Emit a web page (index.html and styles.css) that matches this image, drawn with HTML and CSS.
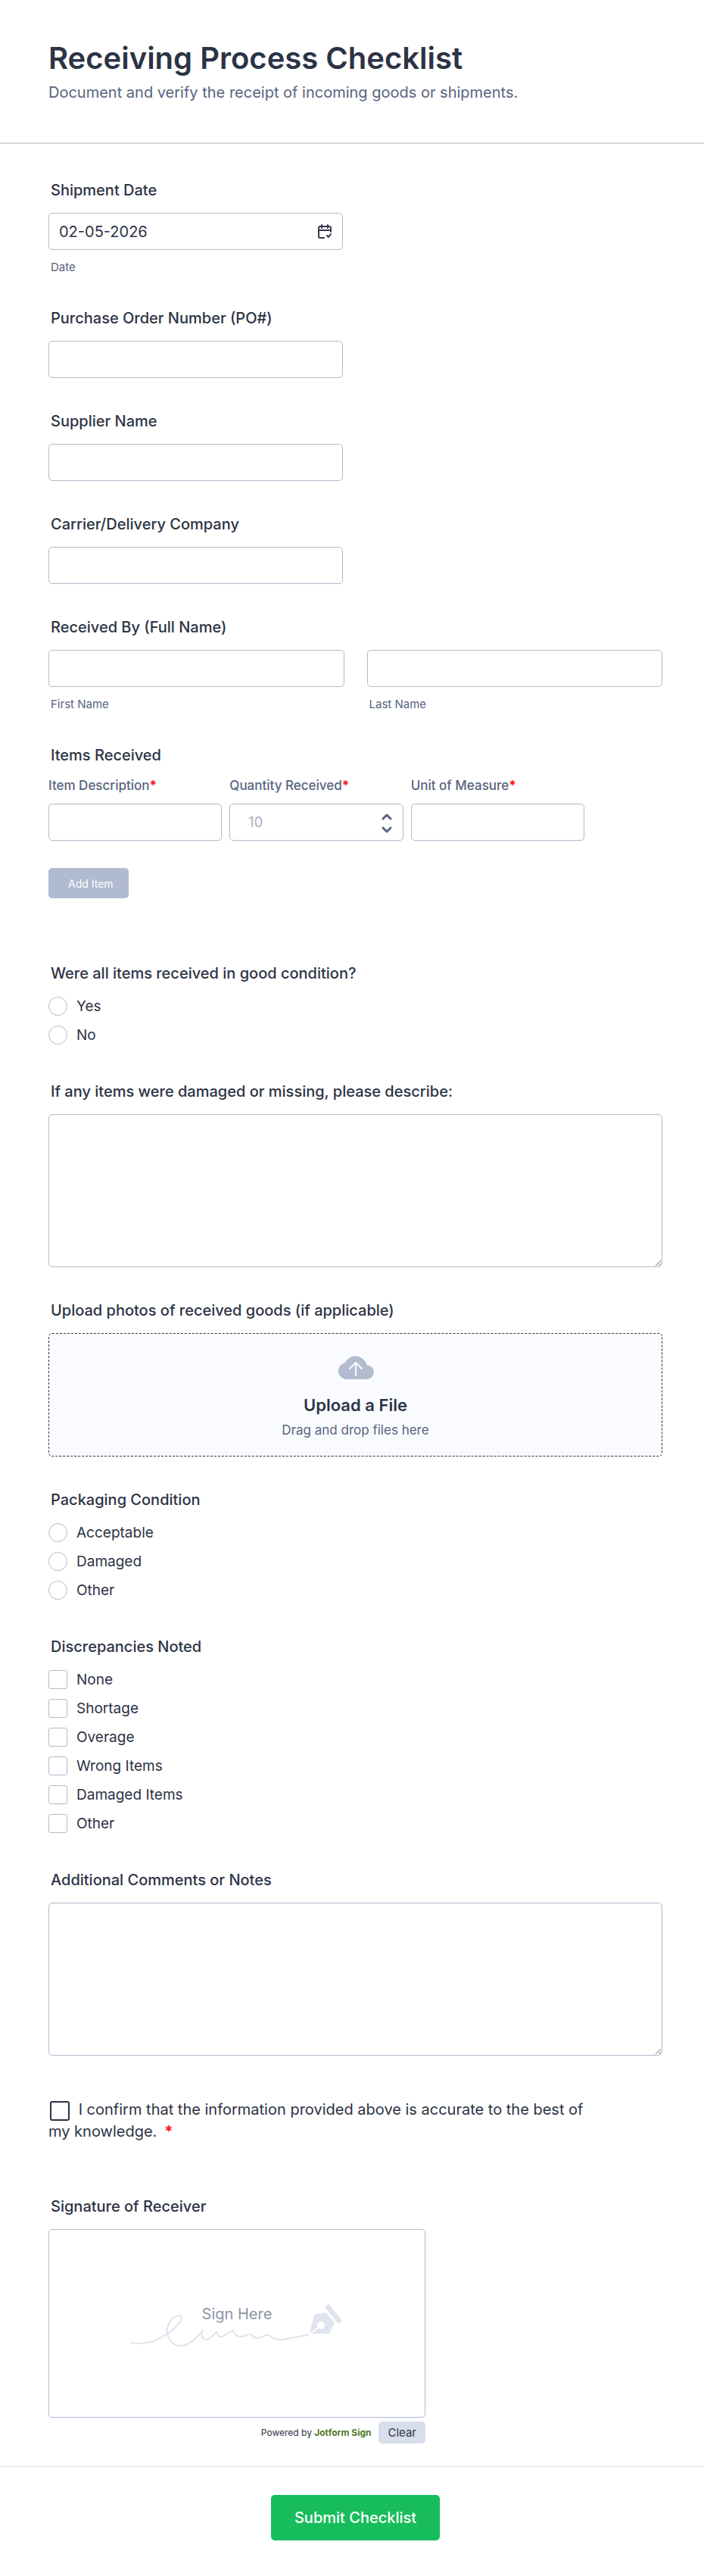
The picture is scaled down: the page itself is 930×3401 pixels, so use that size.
FILE: index.html
```html
<!DOCTYPE html>
<html lang="en">
<head>
    <meta charset="UTF-8">
    <meta name="viewport" content="width=device-width, initial-scale=1.0">
    <title>Receiving Process Checklist</title>
    <link rel="stylesheet" href="styles.css">
</head>
<body>
    <form class="form" action="#" method="post">
        <header class="form-header">
            <h1>Receiving Process Checklist</h1>
            <p>Document and verify the receipt of incoming goods or shipments.</p>
        </header>

        <div class="form-body">
            <div class="field">
                <label class="field-label" for="shipment_date">Shipment Date</label>
                <div class="date-box half">
                    <input class="control" type="text" id="shipment_date" name="shipment_date" value="02-05-2026">
                    <svg class="date-icon" viewBox="0 0 20 20" fill="none" stroke="currentColor" stroke-width="2" stroke-linecap="round" stroke-linejoin="round" aria-hidden="true">
                        <path d="M9 18H4a2 2 0 0 1-2-2V5a2 2 0 0 1 2-2h12a2 2 0 0 1 2 2v5M2 8h16M6 1v4M14 1v4M13 15l2 2 3-4"/>
                    </svg>
                </div>
                <label class="sub-label" for="shipment_date">Date</label>
            </div>

            <div class="field">
                <label class="field-label" for="po_number">Purchase Order Number (PO#)</label>
                <input class="control half" type="text" id="po_number" name="po_number">
            </div>

            <div class="field">
                <label class="field-label" for="supplier">Supplier Name</label>
                <input class="control half" type="text" id="supplier" name="supplier">
            </div>

            <div class="field">
                <label class="field-label" for="carrier">Carrier/Delivery Company</label>
                <input class="control half" type="text" id="carrier" name="carrier">
            </div>

            <div class="field">
                <label class="field-label" for="first_name">Received By (Full Name)</label>
                <div class="name-row">
                    <div>
                        <input class="control" type="text" id="first_name" name="first_name">
                        <label class="sub-label" for="first_name">First Name</label>
                    </div>
                    <div>
                        <input class="control" type="text" id="last_name" name="last_name">
                        <label class="sub-label" for="last_name">Last Name</label>
                    </div>
                </div>
            </div>

            <div class="field items-field">
                <div class="field-label">Items Received</div>
                <div class="items-row">
                    <div>
                        <label class="item-label" for="item_description">Item Description<span class="required">*</span></label>
                        <input class="control" type="text" id="item_description" name="item_description">
                    </div>
                    <div>
                        <label class="item-label" for="item_quantity">Quantity Received<span class="required">*</span></label>
                        <div class="quantity-box">
                            <input class="control" type="number" id="item_quantity" name="item_quantity" placeholder="10">
                            <svg class="quantity-arrows" viewBox="0 0 14 26" fill="none" stroke="currentColor" stroke-width="3" stroke-linecap="round" stroke-linejoin="round" aria-hidden="true">
                                <path d="M2 7l5-5 5 5M2 19l5 5 5-5"/>
                            </svg>
                        </div>
                    </div>
                    <div>
                        <label class="item-label" for="item_unit">Unit of Measure<span class="required">*</span></label>
                        <input class="control" type="text" id="item_unit" name="item_unit">
                    </div>
                </div>
                <button class="add-button" type="button">Add Item</button>
            </div>

            <fieldset class="field choice-field">
                <legend class="field-label">Were all items received in good condition?</legend>
                <div class="choices">
                    <label class="choice"><input type="radio" name="good_condition" value="Yes">Yes</label>
                    <label class="choice"><input type="radio" name="good_condition" value="No">No</label>
                </div>
            </fieldset>

            <div class="field">
                <label class="field-label" for="damage_notes">If any items were damaged or missing, please describe:</label>
                <textarea class="control" id="damage_notes" name="damage_notes"></textarea>
            </div>

            <div class="field">
                <div class="field-label" id="upload_label">Upload photos of received goods (if applicable)</div>
                <label class="upload">
                    <input type="file" name="photos" aria-labelledby="upload_label" multiple>
                    <svg class="upload-icon" viewBox="0 0 48 32" aria-hidden="true">
                        <path fill="#b3bccf" d="M38.600 13.200A15.500 15.500 0 0 0 9.500 10.300 11 11 0 0 0 11 32h27.500a9.400 9.400 0 0 0 .1-18.800z"/>
                        <path fill="none" stroke="#fafbff" stroke-width="2" stroke-linecap="round" stroke-linejoin="round" d="M24 27V10M16 18l8-8 8 8"/>
                    </svg>
                    <span class="upload-title">Upload a File</span>
                    <span class="upload-text">Drag and drop files here</span>
                </label>
            </div>

            <fieldset class="field choice-field">
                <legend class="field-label">Packaging Condition</legend>
                <div class="choices">
                    <label class="choice"><input type="radio" name="packaging" value="Acceptable">Acceptable</label>
                    <label class="choice"><input type="radio" name="packaging" value="Damaged">Damaged</label>
                    <label class="choice"><input type="radio" name="packaging" value="Other">Other</label>
                </div>
            </fieldset>

            <fieldset class="field choice-field">
                <legend class="field-label">Discrepancies Noted</legend>
                <div class="choices">
                    <label class="choice"><input type="checkbox" name="discrepancies" value="None">None</label>
                    <label class="choice"><input type="checkbox" name="discrepancies" value="Shortage">Shortage</label>
                    <label class="choice"><input type="checkbox" name="discrepancies" value="Overage">Overage</label>
                    <label class="choice"><input type="checkbox" name="discrepancies" value="Wrong Items">Wrong Items</label>
                    <label class="choice"><input type="checkbox" name="discrepancies" value="Damaged Items">Damaged Items</label>
                    <label class="choice"><input type="checkbox" name="discrepancies" value="Other">Other</label>
                </div>
            </fieldset>

            <div class="field">
                <label class="field-label" for="comments">Additional Comments or Notes</label>
                <textarea class="control" id="comments" name="comments"></textarea>
            </div>

            <div class="field confirm">
                <input type="checkbox" id="confirm" name="confirm">
                <label for="confirm">I confirm that the information provided above is accurate to the best of my knowledge.<span class="required">*</span></label>
            </div>

            <div class="signature">
                <div class="field-label">Signature of Receiver</div>
                <div class="signature-pad">
                    <svg class="signature-art" viewBox="0 0 280 58" aria-hidden="true">
                        <path fill="none" stroke="#dfe3ed" stroke-width="2" stroke-linecap="round" d="M1 51C20 55 35 48 48 39C60 31 70 20 66 16C59 12 46 25 48 38C50 49 57 56 66 55C79 54 88 43 94 36C93 41 94 47 99 47C105 47 110 38 114 37C114 41 115 43 119 43C126 42 130 36 135 35C137 40 140 44 145 43C151 43 153 39 158 40C162 44 166 46 171 44C176 42 181 39 185 43C190 47 194 48 201 47C212 45 223 42 234 41"/>
                        <path fill="#dfe3ed" d="M242 14l15-3 12 13-7 15h-25l-1-1zM256 4l5-4 18 22-5 4z"/>
                        <path stroke="#fff" stroke-width="2" d="M236 40l15-12"/>
                        <circle cx="251" cy="28" r="5" fill="#fff"/>
                    </svg>
                    <span class="signature-text">Sign Here</span>
                </div>
                <div class="signature-footer">
                    <span>Powered by <a href="#">Jotform Sign</a></span>
                    <button class="clear-button" type="button">Clear</button>
                </div>
            </div>
        </div>

        <div class="form-footer">
            <button class="submit-button" type="submit">Submit Checklist</button>
        </div>
    </form>
</body>
</html>
```
FILE: styles.css
```css
* {
    box-sizing: border-box;
}

body {
    margin: 0;
    background-color: #fff;
    color: #2c3345;
    font-family: Inter, 'Liberation Sans', sans-serif;
    font-size: 20px;
}

input, textarea, button {
    font-family: inherit;
    color: inherit;
}

.form-header {
    padding: 52px 64px 53px;
    border-bottom: 2px solid #d7d8e1;
}

.form-header h1 {
    margin: 0;
    font-size: 40px;
    font-weight: 600;
    line-height: 50px;
}

.form-header p {
    margin: 7px 0 0;
    color: #57647e;
    line-height: 26px;
}

.form-body {
    padding: 48px 55px 30px 64px;
}

.field {
    margin: 0 0 44px;
    padding: 0;
    border: 0;
}

.field-label {
    display: block;
    padding: 0 3px;
    margin-bottom: 17px;
    font-weight: 500;
    line-height: 26px;
}

.control {
    display: block;
    width: 100%;
    height: 49px;
    padding: 0 13px;
    border: 1px solid #b4b9cc;
    border-radius: 5px;
    background-color: #fff;
    font-size: 20px;
}

.half {
    width: 48%;
}

textarea.control {
    height: 202px;
    padding: 13px;
}

.sub-label {
    display: block;
    margin-top: 13px;
    padding: 0 3px;
    color: #57647e;
    font-size: 15px;
    line-height: 20px;
}

.required {
    color: #ff1414;
    font-weight: 700;
}

/* Date */
.date-box, .quantity-box {
    position: relative;
}

.date-icon {
    position: absolute;
    top: 15px;
    right: 14px;
    width: 20px;
    height: 20px;
    color: #39374e;
}

.name-row {
    display: grid;
    grid-template-columns: 1fr 1fr;
    gap: 30px;
}

/* Items */
.items-field {
    margin-bottom: 86px;
}

.items-row {
    display: grid;
    grid-template-columns: repeat(3, 1fr);
    gap: 10px;
    max-width: 708px;
    margin-bottom: 36px;
}

.item-label {
    display: block;
    margin-bottom: 14px;
    color: #57647e;
    font-size: 17px;
    font-weight: 500;
    line-height: 20px;
}

.quantity-box .control {
    padding-left: 24px;
    appearance: textfield;
    font-size: 18px;
}

.quantity-box .control::placeholder {
    color: #a9aeba;
}

.quantity-arrows {
    position: absolute;
    top: 13px;
    right: 15px;
    width: 14px;
    height: 26px;
    color: #57647e;
}

.add-button {
    display: block;
    height: 40px;
    padding: 0 20px 0 26px;
    border: 0;
    border-radius: 5px;
    background-color: #b0bad1;
    color: #fff;
    font-size: 14px;
}

/* Radios and tick boxes */
.choice-field {
    margin-bottom: 49px;
}

.choice-field .field-label {
    margin-bottom: 18px;
}

.choices {
    display: grid;
    justify-items: start;
    gap: 13px;
}

.choice {
    display: flex;
    align-items: center;
    gap: 12px;
    font-size: 19px;
    line-height: 25px;
}

input[type="radio"], input[type="checkbox"] {
    appearance: none;
    width: 25px;
    height: 25px;
    margin: 0;
    border: 1px solid #b4b9cc;
    border-radius: 3px;
    background-color: #fff;
}

input[type="radio"] {
    border-radius: 50%;
}

/* Upload */
.upload {
    display: flex;
    flex-direction: column;
    align-items: center;
    padding: 28px 20px 21px;
    border: 1px dashed #2c3345;
    border-radius: 5px;
    background-color: #fafbff;
}

.upload input {
    position: absolute;
    opacity: 0;
    width: 1px;
    height: 1px;
}

.upload-icon {
    width: 48px;
    height: 32px;
}

.upload-title {
    margin-top: 20px;
    font-size: 22px;
    font-weight: 600;
    line-height: 28px;
}

.upload-text {
    margin-top: 6px;
    color: #57647e;
    font-size: 17px;
    line-height: 26px;
}

/* Confirmation */
.confirm {
    max-width: 720px;
    margin: 57px 0 72px;
    line-height: 28px;
}

.confirm input[type="checkbox"] {
    width: 26px;
    height: 26px;
    margin: 0 6px 0 2px;
    border: 2px solid #2c3345;
    vertical-align: middle;
}

.confirm .required {
    margin-left: 10px;
}

/* Signature */
.signature {
    width: 498px;
    max-width: 100%;
}

.signature-pad {
    position: relative;
    display: flex;
    justify-content: center;
    height: 249px;
    padding-top: 98px;
    border: 1px solid #b0bad1;
    border-radius: 5px;
}

.signature-art {
    width: 280px;
    height: 58px;
}

.signature-text {
    position: absolute;
    top: 98px;
    color: #8d95a6;
    line-height: 26px;
}

.signature-footer {
    display: flex;
    justify-content: flex-end;
    align-items: center;
    gap: 10px;
    margin-top: 5px;
    font-size: 12px;
}

.signature-footer a {
    color: #4f7a1f;
    font-weight: 700;
    text-decoration: none;
}

.clear-button {
    height: 29px;
    padding: 0 12px;
    border: 0;
    border-radius: 5px;
    background-color: #d8deec;
    font-size: 15px;
}

.form-footer {
    padding: 37px 55px 49px 64px;
    border-top: 1px solid #e3e5ed;
    text-align: center;
}

.submit-button {
    height: 60px;
    padding: 0 31px;
    border: 0;
    border-radius: 5px;
    background-color: #18bd5b;
    color: #fff;
    font-size: 20px;
    font-weight: 500;
}
```
